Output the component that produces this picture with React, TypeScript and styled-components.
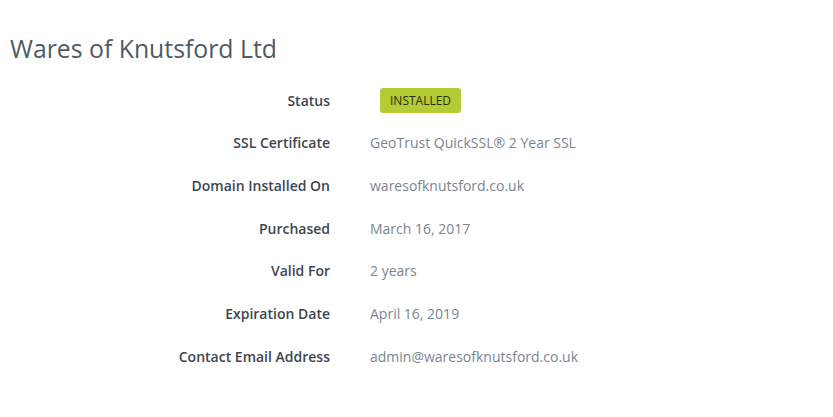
import React from 'react';
import styled, { createGlobalStyle } from 'styled-components';

const GlobalStyle = createGlobalStyle`
  body {
    margin: 0;
    background: #ffffff;
    font-family: 'Open Sans', 'Liberation Sans', sans-serif;
  }
`;

const Page = styled.div`
  padding: 34px 10px 0 10px;
`;

const Title = styled.h1`
  margin: 0 0 17px 0;
  font-size: 24.8px;
  line-height: 28px;
  font-weight: 400;
  color: #505a64;
`;

const Details = styled.div`
  display: grid;
  grid-template-columns: 320px 1fr;
  column-gap: 40px;
  grid-auto-rows: 42.67px;
  align-items: center;
`;

const Label = styled.div`
  text-align: right;
  font-size: 14px;
  font-weight: 600;
  color: #3d4650;
`;

const Value = styled.div`
  font-size: 14px;
  color: #7b8591;
`;

const Badge = styled.span`
  display: inline-block;
  margin-left: 10px;
  padding: 4px 10px;
  border-radius: 3px;
  background: #b5cb35;
  color: #263010;
  font-size: 12px;
  line-height: 17px;
`;

const rows: [string, string][] = [
  ['SSL Certificate', 'GeoTrust QuickSSL® 2 Year SSL'],
  ['Domain Installed On', 'waresofknutsford.co.uk'],
  ['Purchased', 'March 16, 2017'],
  ['Valid For', '2 years'],
  ['Expiration Date', 'April 16, 2019'],
  ['Contact Email Address', 'admin@waresofknutsford.co.uk'],
];

export default function App() {
  return (
    <Page>
      <GlobalStyle />
      <Title>Wares of Knutsford Ltd</Title>
      <Details>
        <Label>Status</Label>
        <Value>
          <Badge>INSTALLED</Badge>
        </Value>
        {rows.map(([label, value]) => (
          <React.Fragment key={label}>
            <Label>{label}</Label>
            <Value>{value}</Value>
          </React.Fragment>
        ))}
      </Details>
    </Page>
  );
}
